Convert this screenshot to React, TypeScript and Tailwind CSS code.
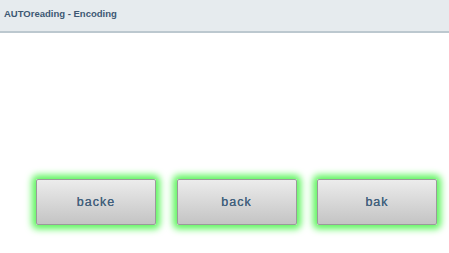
import React from "react";

const words = ["backe", "back", "bak"];

export default function App() {
  return (
    <div className="w-[449px] h-[253px] bg-white flex flex-col overflow-hidden" style={{ fontFamily: '"Liberation Sans", Arial, sans-serif' }}>
      <div className="h-[33px] shrink-0 bg-[#e6ebee] border-b-2 border-[#bcc8cf] flex items-center px-[4px]">
        <span className="text-[9.5px] font-bold text-[#3d5873] -mt-[3px]">AUTOreading - Encoding</span>
      </div>
      <div className="flex-1 flex items-start pt-[146px] pl-[36px] gap-[20.5px]">
        {words.map((w) => (
          <button
            key={w}
            className="w-[120px] h-[46px] rounded-[2px] border border-[#9a9a9a] bg-gradient-to-b from-[#ececec] to-[#c4c4c4] text-[12.5px] tracking-[1px] text-[#42607c] [text-shadow:0_0_0.4px_#42607c] shadow-[0_0_7px_4px_#5cf55c]"
          >
            {w}
          </button>
        ))}
      </div>
    </div>
  );
}
